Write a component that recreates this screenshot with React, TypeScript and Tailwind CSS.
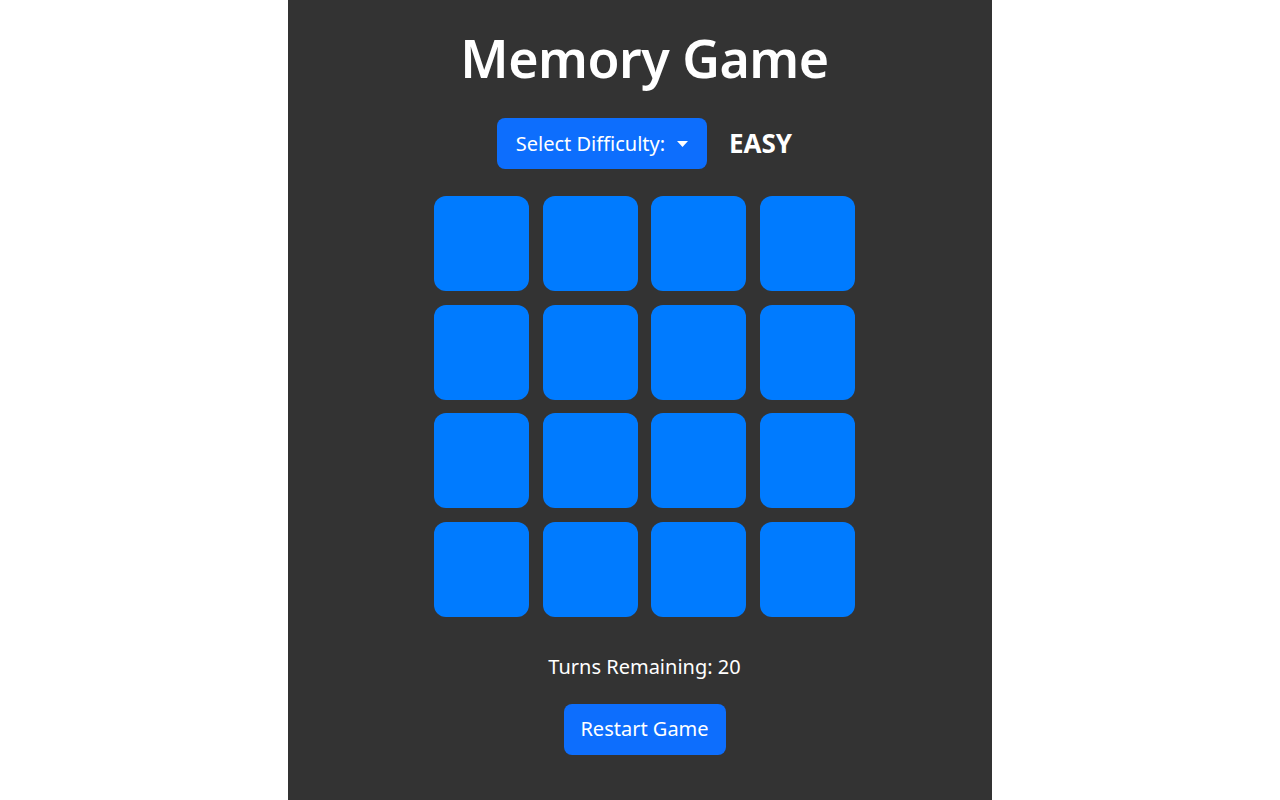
import React from "react";

export default function App() {
  const cards = Array.from({ length: 16 });
  return (
    <div className="min-h-screen w-full bg-white" style={{ fontFamily: '"Noto Sans", "Open Sans", sans-serif' }}>
      <div className="mx-auto flex min-h-[800px] w-[704px] flex-col items-center bg-[#333333] pl-[9px] text-white">
        <h1 className="mt-[27px] text-[52px] font-semibold leading-[1.2] tracking-[-0.5px]">Memory Game</h1>
        <div className="mt-[29px] flex items-center gap-[22px]">
          <button className="flex h-[51px] w-[210px] items-center justify-center gap-[12px] rounded-[8px] bg-[#0d6efd] text-[20px] text-white">
            <span>Select Difficulty:</span>
            <svg width="11" height="6" viewBox="0 0 11 6"><path d="M0 0 L11 0 L5.5 6 Z" fill="white" /></svg>
          </button>
          <span className="text-[26px] font-bold">EASY</span>
        </div>
        <div className="mt-[27px] grid grid-cols-4 gap-[13.5px]">
          {cards.map((_, i) => (
            <div key={i} className="h-[95px] w-[95px] rounded-[12px] bg-[#007bff]" />
          ))}
        </div>
        <p className="mt-[35px] text-[20px] leading-[1.5]">Turns Remaining: 20</p>
        <button className="mt-[22px] h-[51px] w-[162px] rounded-[8px] bg-[#0d6efd] text-[20px] text-white">Restart Game</button>
      </div>
    </div>
  );
}
